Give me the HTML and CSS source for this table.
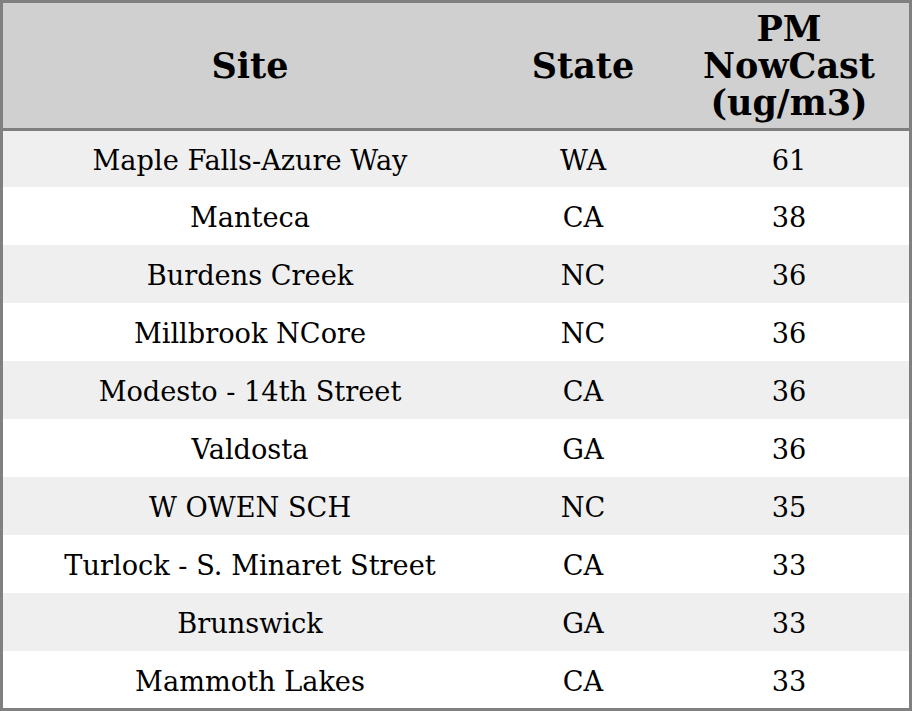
FILE: index.html
```html
<!DOCTYPE html>
<html>
<head>
<meta charset="utf-8">
<link rel="stylesheet" href="styles.css">
</head>
<body>
<table class="aq">
  <thead>
    <tr><th class="c-site">Site</th><th class="c-state">State</th><th class="c-pm">PM NowCast (ug/m3)</th></tr>
  </thead>
  <tbody>
    <tr class="r-first"><td>Maple Falls-Azure Way</td><td>WA</td><td>61</td></tr>
    <tr><td>Manteca</td><td>CA</td><td>38</td></tr>
    <tr><td>Burdens Creek</td><td>NC</td><td>36</td></tr>
    <tr><td>Millbrook NCore</td><td>NC</td><td>36</td></tr>
    <tr><td>Modesto - 14th Street</td><td>CA</td><td>36</td></tr>
    <tr><td>Valdosta</td><td>GA</td><td>36</td></tr>
    <tr><td>W OWEN SCH</td><td>NC</td><td>35</td></tr>
    <tr><td>Turlock - S. Minaret Street</td><td>CA</td><td>33</td></tr>
    <tr><td>Brunswick</td><td>GA</td><td>33</td></tr>
    <tr class="r-last"><td>Mammoth Lakes</td><td>CA</td><td>33</td></tr>
  </tbody>
</table>
</body>
</html>
```
FILE: styles.css
```css
html, body { margin: 0; padding: 0; background: #fff; }
.aq {
  width: 912px;
  border-collapse: separate;
  border-spacing: 0;
  border: 3px solid #808080;
  font-family: "DejaVu Serif", serif;
  color: #000;
  table-layout: fixed;
}
.aq th {
  box-sizing: border-box;
  background: #d0d0d0;
  font-weight: bold;
  font-size: 35px;
  line-height: 37px;
  height: 128px;
  padding: 0 4px;
  text-align: center;
  border-bottom: 3px solid #808080;
}
.c-site { width: 494px; }
.c-state { width: 172px; }
.aq td {
  box-sizing: border-box;
  font-size: 27.2px;
  line-height: 31px;
  text-align: center;
  height: 58px;
  padding: 3px 0 0 0;
  white-space: nowrap;
}
.aq tr.r-first td { height: 56px; }
.aq tr.r-last td { height: 57px; }
.aq tbody tr:nth-child(odd) td { background: #efefef; }
```
